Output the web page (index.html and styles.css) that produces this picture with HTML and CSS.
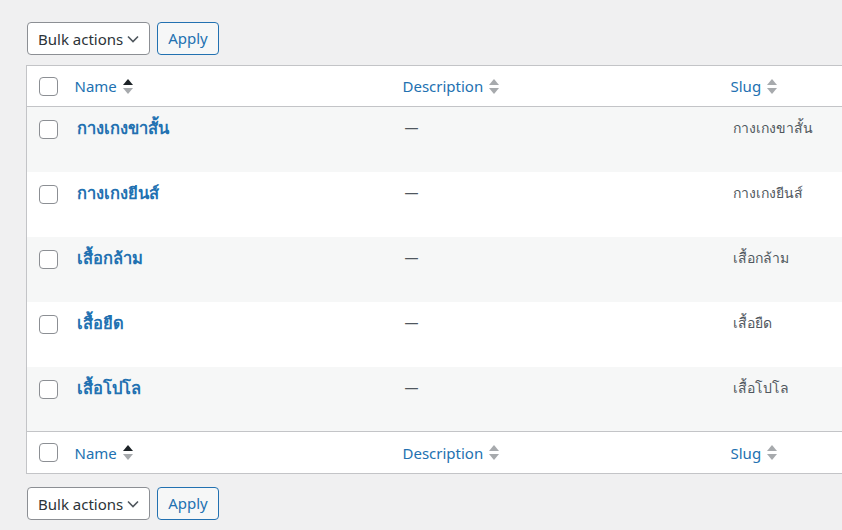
FILE: index.html
```html
<!DOCTYPE html>
<html lang="th">
<head>
  <meta charset="UTF-8">
  <title>Categories</title>
  <link rel="stylesheet" href="styles.css">
</head>
<body>
  <div class="wrap">
    <div class="tablenav">
      <div class="select">Bulk actions
        <svg class="chev" width="12" height="8" viewBox="0 0 12 8"><path d="M1 1.5l5 5 5-5" fill="none" stroke="#50575e" stroke-width="1.6"/></svg>
      </div>
      <button class="apply">Apply</button>
    </div>

    <table class="list">
      <colgroup>
        <col class="c-check"><col class="c-col"><col class="c-col"><col class="c-col"><col>
      </colgroup>
      <thead>
        <tr>
          <th class="check"><span class="box"></span></th>
          <th><a>Name <svg class="sort" width="10" height="17" viewBox="0 0 10 17"><path d="M5 1l5 6H0z" fill="#1d2327"/><path d="M5 16L0 10h10z" fill="#a7aaad"/></svg></a></th>
          <th><a>Description <svg class="sort" width="10" height="17" viewBox="0 0 10 17"><path d="M5 1l5 6H0z" fill="#a7aaad"/><path d="M5 16L0 10h10z" fill="#a7aaad"/></svg></a></th>
          <th><a>Slug <svg class="sort" width="10" height="17" viewBox="0 0 10 17"><path d="M5 1l5 6H0z" fill="#a7aaad"/><path d="M5 16L0 10h10z" fill="#a7aaad"/></svg></a></th>
          <th></th>
        </tr>
      </thead>
      <tbody>
        <tr class="alt">
          <td class="check"><span class="box"></span></td>
          <td><a class="title">กางเกงขาสั้น</a></td>
          <td class="desc">—</td>
          <td class="slug">กางเกงขาสั้น</td>
          <td></td>
        </tr>
        <tr>
          <td class="check"><span class="box"></span></td>
          <td><a class="title">กางเกงยีนส์</a></td>
          <td class="desc">—</td>
          <td class="slug">กางเกงยีนส์</td>
          <td></td>
        </tr>
        <tr class="alt">
          <td class="check"><span class="box"></span></td>
          <td><a class="title">เสื้อกล้าม</a></td>
          <td class="desc">—</td>
          <td class="slug">เสื้อกล้าม</td>
          <td></td>
        </tr>
        <tr>
          <td class="check"><span class="box"></span></td>
          <td><a class="title">เสื้อยืด</a></td>
          <td class="desc">—</td>
          <td class="slug">เสื้อยืด</td>
          <td></td>
        </tr>
        <tr class="alt">
          <td class="check"><span class="box"></span></td>
          <td><a class="title">เสื้อโปโล</a></td>
          <td class="desc">—</td>
          <td class="slug">เสื้อโปโล</td>
          <td></td>
        </tr>
      </tbody>
      <tfoot>
        <tr>
          <th class="check"><span class="box"></span></th>
          <th><a>Name <svg class="sort" width="10" height="17" viewBox="0 0 10 17"><path d="M5 1l5 6H0z" fill="#1d2327"/><path d="M5 16L0 10h10z" fill="#a7aaad"/></svg></a></th>
          <th><a>Description <svg class="sort" width="10" height="17" viewBox="0 0 10 17"><path d="M5 1l5 6H0z" fill="#a7aaad"/><path d="M5 16L0 10h10z" fill="#a7aaad"/></svg></a></th>
          <th><a>Slug <svg class="sort" width="10" height="17" viewBox="0 0 10 17"><path d="M5 1l5 6H0z" fill="#a7aaad"/><path d="M5 16L0 10h10z" fill="#a7aaad"/></svg></a></th>
          <th></th>
        </tr>
      </tfoot>
    </table>

    <div class="tablenav bottom">
      <div class="select">Bulk actions
        <svg class="chev" width="12" height="8" viewBox="0 0 12 8"><path d="M1 1.5l5 5 5-5" fill="none" stroke="#50575e" stroke-width="1.6"/></svg>
      </div>
      <button class="apply">Apply</button>
    </div>
  </div>
</body>
</html>
```

FILE: styles.css
```css
html, body {
  margin: 0;
  background: #f0f0f1;
  overflow: hidden;
}
body {
  font-family: "Noto Sans", "Open Sans", sans-serif;
  font-size: 15px;
  color: #3c434a;
}
.wrap {
  padding: 22px 0 0 26px;
  width: 1200px;
}
.tablenav {
  display: flex;
  gap: 7px;
  height: 33px;
  margin-bottom: 10px;
}
.tablenav.bottom {
  margin-top: 13px;
}
.select {
  box-sizing: border-box;
  width: 123px;
  margin-left: 1px;
  height: 33px;
  padding: 0 10px;
  display: flex;
  align-items: center;
  justify-content: space-between;
  background: #fff;
  border: 1px solid #8c8f94;
  border-radius: 4px;
  color: #2c3338;
}
.apply {
  box-sizing: border-box;
  width: 62px;
  height: 33px;
  font: inherit;
  line-height: 30px;
  color: #2271b1;
  background: #f6f7f7;
  border: 1px solid #2271b1;
  border-radius: 4px;
  padding: 0 0 2px;
}
.list {
  table-layout: fixed;
  width: 1100px;
  border-collapse: collapse;
  background: #fff;
  border: 1px solid #c3c4c7;
}
.c-check { width: 39px; }
.c-col { width: 328px; }
th, td {
  text-align: left;
  vertical-align: top;
  padding: 0 10px;
}
thead th, tfoot th {
  height: 40px;
  font-weight: normal;
  vertical-align: middle;
}
tfoot th { height: 41px; }
thead tr { border-bottom: 1px solid #c3c4c7; }
tfoot tr { border-top: 1px solid #c3c4c7; }
th a {
  color: #2271b1;
  display: inline-flex;
  align-items: center;
  gap: 6px;
  margin-left: -1px;
}
tbody td {
  height: 65px;
  box-sizing: border-box;
  padding-top: 9px;
  line-height: 24px;
}
tbody tr.alt { background: #f6f7f7; }
.check {
  padding: 0 0 0 12px;
}
thead .check, tfoot .check {
  vertical-align: middle;
}
tbody .check {
  padding-top: 13px;
}
.box {
  display: block;
  box-sizing: border-box;
  width: 19px;
  height: 19px;
  background: #fff;
  border: 1px solid #8c8f94;
  border-radius: 4px;
}
.title {
  color: #2271b1;
  font-weight: 700;
  font-size: 16.5px;
  padding-left: 1px;
}
.desc, .slug {
  color: #50575e;
  font-size: 14px;
  padding-left: 11px;
}
```
